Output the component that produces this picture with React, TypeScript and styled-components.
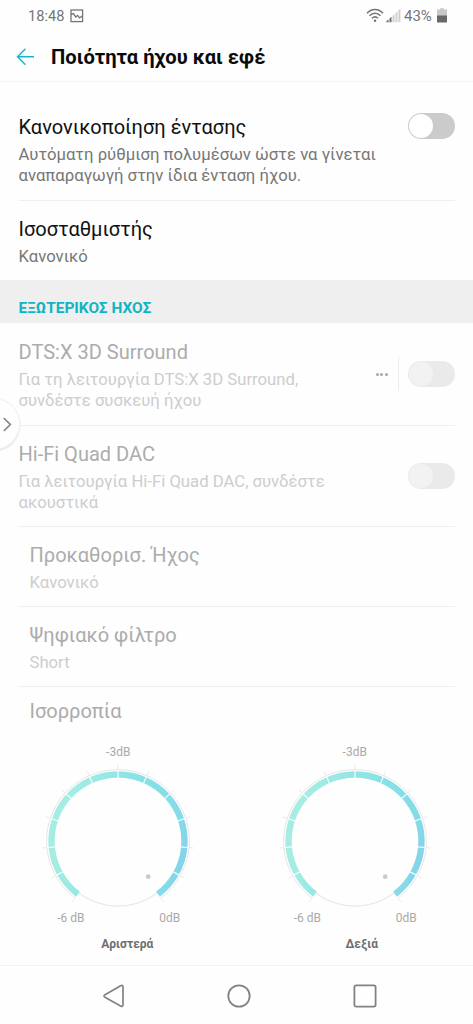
import React from 'react';
import styled, { createGlobalStyle } from 'styled-components';

const GlobalStyle = createGlobalStyle`
  * { box-sizing: border-box; }
  body { margin: 0; background: #fefefe; font-family: Roboto, "Noto Sans", sans-serif; }
`;

const Screen = styled.div`
  position: relative;
  width: 473px;
  height: 1024px;
  display: flex;
  flex-direction: column;
  background: #fefefe;
  overflow: hidden;
`;

const StatusBar = styled.div`
  flex: none;
  height: 31px;
  display: flex;
  align-items: center;
  padding: 0 26px 0 28px;
  color: #757575;
  font-size: 14.6px;
  line-height: 20px;
`;

const Clock = styled.span`
  width: 42px;
  white-space: nowrap;
`;

const StatusRight = styled.div`
  margin-left: auto;
  display: flex;
  align-items: center;
`;

const Percent = styled.span`
  width: 33px;
  font-size: 15px;
  white-space: nowrap;
`;

const AppBar = styled.header`
  flex: none;
  height: 51px;
  display: flex;
  align-items: center;
  padding: 1px 16px 0;
  border-bottom: 1px solid #f3f3f3;
`;

const Heading = styled.h1`
  margin: 1px 0 0 16px;
  font-size: 20.2px;
  line-height: 24px;
  font-weight: 700;
  color: #0a0a0a;
  white-space: nowrap;
`;

const Row = styled.section<{ $h: number; $top: number; $indent?: boolean; $last?: boolean }>`
  flex: none;
  height: ${(p) => p.$h}px;
  margin: 0 18.5px;
  padding: ${(p) => p.$top}px 0 0 ${(p) => (p.$indent ? 11 : 0)}px;
  border-bottom: 1px solid ${(p) => (p.$last ? 'transparent' : '#efefef')};
  display: flex;
  justify-content: space-between;
`;

const Title = styled.div<{ $off?: boolean }>`
  font-size: 20.05px;
  line-height: 24px;
  color: ${(p) => (p.$off ? '#acacac' : '#111')};
  white-space: nowrap;
`;

const Summary = styled.div<{ $off?: boolean }>`
  margin-top: 4.6px;
  font-size: 16.7px;
  line-height: 21.8px;
  color: ${(p) => (p.$off ? '#cdcdcd' : '#777')};
  white-space: nowrap;
`;

const Controls = styled.div<{ $top: number }>`
  display: flex;
  align-items: center;
  height: 34px;
  margin-top: ${(p) => p.$top}px;
`;

const Track = styled.div<{ $off?: boolean }>`
  width: 47px;
  height: 26px;
  padding: 1px;
  border-radius: 13px;
  background: ${(p) => (p.$off ? '#eaeaea' : '#cbcbcb')};
`;

const Knob = styled.div<{ $off?: boolean }>`
  width: 24px;
  height: 24px;
  border-radius: 50%;
  background: ${(p) => (p.$off ? '#f2f2f2' : '#fff')};
`;

const Dots = styled.div`
  display: flex;
  gap: 1.7px;
  margin-right: 9.5px;
  i { width: 3px; height: 3px; border-radius: 50%; background: #a8a8a8; }
`;

const Divider = styled.div`
  width: 1px;
  height: 34px;
  margin-right: 9px;
  background: #ececec;
`;

const SectionLabel = styled.h2`
  flex: none;
  height: 43px;
  margin: 0;
  padding: 18px 18.5px 0;
  background: #efefef;
  color: #11b4c2;
  font-size: 15.4px;
  line-height: 20px;
  font-weight: 700;
  white-space: nowrap;
`;

const Balance = styled.section`
  flex: none;
  height: 278px;
  padding-top: 12px;
`;

const BalanceTitle = styled(Title)`
  margin-left: 29.5px;
`;

const DialPair = styled.div`
  display: grid;
  grid-template-columns: 1fr 1fr;
`;

const DialBox = styled.div`
  display: flex;
  flex-direction: column;
  align-items: center;
  padding-top: 21px;
  font-size: 12px;
  line-height: 16px;
  color: #a9a9a9;
`;

const DialSvg = styled.svg`
  display: block;
  width: 160px;
  height: 146px;
  margin-top: 5px;
`;

const Range = styled.div`
  width: 124px;
  display: flex;
  justify-content: space-between;
  margin-top: -1px;
  padding-left: 1px;
`;

const Side = styled.div<{ $shift: number }>`
  margin: 10px 0 0 ${(p) => p.$shift}px;
  font-size: 12px;
  font-weight: 700;
  color: #6f6f6f;
`;

const NavBar = styled.nav`
  flex: none;
  height: 59px;
  margin-top: auto;
  border-top: 1px solid #f1f1f1;
  display: flex;
  align-items: center;
  justify-content: center;
  gap: 102px;
  padding: 2px 0 0 4px;
  svg { display: block; }
`;

const EdgeHandle = styled.div`
  position: absolute;
  left: -32px;
  top: 398px;
  width: 52px;
  height: 52px;
  border-radius: 50%;
  background: #fefefe;
  border: 1px solid #f3f3f3;
  box-shadow: 0 1px 2px rgba(0, 0, 0, 0.12);
  display: flex;
  align-items: center;
  justify-content: flex-end;
  padding-right: 6.6px;
`;

const Toggle = ({ off }: { off?: boolean }) => (
  <Track $off={off}>
    <Knob $off={off} />
  </Track>
);

const CX = 80;
const CY = 76;
const END = 143;
const STEP = END / 6;

const polar = (deg: number, r: number) => {
  const a = (deg * Math.PI) / 180;
  return [CX + r * Math.sin(a), CY - r * Math.cos(a)];
};

const arc = (r: number, from = -END, to = END) => {
  const [x1, y1] = polar(from, r);
  const [x2, y2] = polar(to, r);
  return `M${x1} ${y1}A${r} ${r} 0 ${to - from > 180 ? 1 : 0} 1 ${x2} ${y2}`;
};

const Dial = ({ side, id, shift }: { side: string; id: string; shift: number }) => {
  const marks = Array.from({ length: 13 }, (_, i) => (i - 6) * STEP);
  return (
    <DialBox>
      <div>-3dB</div>
      <DialSvg viewBox="0 0 160 146">
        <defs>
          <linearGradient id={id} x1="0" y1="0.75" x2="1" y2="0.95">
            <stop offset="0" stopColor="#a5ede3" />
            <stop offset="0.55" stopColor="#85e1e6" />
            <stop offset="0.85" stopColor="#85dbe8" />
            <stop offset="1" stopColor="#85d0e8" />
          </linearGradient>
        </defs>
        <path d={arc(71.4)} fill="none" stroke="#e6e6e6" strokeWidth="1" />
        <path d={arc(65.2, END, 360 - END)} fill="none" stroke="#e9e9e9" strokeWidth="1.2" />
        <path d={arc(66.5)} fill="none" stroke={`url(#${id})`} strokeWidth="6.4" />
        {marks.map((m, i) => {
          const [a, b] = polar(m, 72);
          const [c, d] = polar(m, 76);
          const [e, f] = polar(m, 63);
          const [g, h] = polar(m, 70);
          return (
            <g key={m}>
              <line x1={a} y1={b} x2={c} y2={d} stroke="#e6e6e6" strokeWidth="0.9" />
              {i > 0 && i < 12 && <line x1={e} y1={f} x2={g} y2={h} stroke="#f6fefe" strokeWidth="1.2" />}
            </g>
          );
        })}
        <circle cx="110.2" cy="111.7" r="2.4" fill="#cbcbcb" />
      </DialSvg>
      <Range>
        <span>-6 dB</span>
        <span>0dB</span>
      </Range>
      <Side $shift={shift}>{side}</Side>
    </DialBox>
  );
};

export default function App() {
  return (
    <>
      <GlobalStyle />
      <Screen>
        <StatusBar>
          <Clock>18:48</Clock>
          <svg width="14" height="14" viewBox="0 0 14 14" fill="none" stroke="#757575" strokeWidth="1.3">
            <rect x="1" y="1" width="11.6" height="11.6" />
            <path d="M1 5.4L3.3 4.6L5.8 8L7.6 6.4L9.6 8.8L12.6 6.8" />
          </svg>
          <StatusRight>
            <svg width="18" height="15" viewBox="0 0 18 15" fill="none" stroke="#757575" strokeWidth="1.5">
              <path d="M1 5.2C5.5 .2 12.5 .2 17 5.2M3.5 7.8C6.7 4.4 11.3 4.4 14.5 7.8M6 10.3C7.8 8.6 10.2 8.6 12 10.3" />
              <circle cx="9" cy="12.8" r="1.2" fill="#757575" stroke="none" />
            </svg>
            <svg width="20" height="15" viewBox="-2 0 20 15">
              <path d="M.5 14.2V13L2.6 11.5V14.2zM3.5 14.2V10.5L5.5 8.8V14.2z" fill="#6b6b6b" />
              <path d="M6.5 14.2V8L8.5 6.1V14.2zM9.5 14.2V5.2L11.4 3.4V14.2zM12.4 14.2V2.5L14.4 .6V14.2z" fill="#cfcfcf" />
            </svg>
            <Percent>43%</Percent>
            <svg width="10" height="15" viewBox="0 0 10 15">
              <path d="M0 1.5H3V.3H7V1.5H10V8H0z" fill="#c9c9c9" />
              <rect y="7.5" width="10" height="7" fill="#686868" />
            </svg>
          </StatusRight>
        </StatusBar>
        <AppBar>
          <svg width="19" height="18" viewBox="0 0 19 18" fill="none" stroke="#14b8c8" strokeWidth="1.4">
            <path d="M18 8.7H1.5M9.5 .7L1.5 8.7L9.5 16.7" />
          </svg>
          <Heading>Ποιότητα ήχου και εφέ</Heading>
        </AppBar>
        <Row $h={119} $top={33}>
          <div>
            <Title>Κανονικοποίηση έντασης</Title>
            <Summary>Αυτόματη ρύθμιση πολυμέσων ώστε να γίνεται<br />αναπαραγωγή στην ίδια ένταση ήχου.</Summary>
          </div>
          <Controls $top={-6}><Toggle /></Controls>
        </Row>
        <Row $h={79} $top={16} $last>
          <div>
            <Title>Ισοσταθμιστής</Title>
            <Summary>Κανονικό</Summary>
          </div>
        </Row>
        <SectionLabel>ΕΞΩΤΕΡΙΚΟΣ ΗΧΟΣ</SectionLabel>
        <Row $h={103} $top={17}>
          <div>
            <Title $off>DTS:X 3D Surround</Title>
            <Summary $off>Για τη λειτουργία DTS:X 3D Surround,<br />συνδέστε συσκευή ήχου</Summary>
          </div>
          <Controls $top={17}>
            <Dots><i /><i /><i /></Dots>
            <Divider />
            <Toggle off />
          </Controls>
        </Row>
        <Row $h={101} $top={16}>
          <div>
            <Title $off>Hi-Fi Quad DAC</Title>
            <Summary $off>Για λειτουργία Hi-Fi Quad DAC, συνδέστε<br />ακουστικά</Summary>
          </div>
          <Controls $top={17}><Toggle off /></Controls>
        </Row>
        <Row $h={80} $top={16} $indent>
          <div>
            <Title $off>Προκαθορισ. Ήχος</Title>
            <Summary $off>Κανονικό</Summary>
          </div>
        </Row>
        <Row $h={80} $top={16} $indent>
          <div>
            <Title $off>Ψηφιακό φίλτρο</Title>
            <Summary $off>Short</Summary>
          </div>
        </Row>
        <Balance>
          <BalanceTitle $off>Ισορροπία</BalanceTitle>
          <DialPair>
            <Dial side="Αριστερά" id="leftArc" shift={18} />
            <Dial side="Δεξιά" id="rightArc" shift={14} />
          </DialPair>
        </Balance>
        <NavBar>
          <svg width="24" height="26" viewBox="-1 0 24 26" fill="none" stroke="#828282" strokeWidth="1.7" strokeLinejoin="round">
            <path d="M3 11.7L18.6 2.8Q21 1.6 21 4V21.6Q21 24.2 18.6 22.9L3 14.3Q1 13 3 11.7Z" />
          </svg>
          <svg width="24" height="24" viewBox="0 0 24 24" fill="none" stroke="#828282" strokeWidth="1.8">
            <circle cx="12" cy="12" r="10.7" />
          </svg>
          <svg width="24" height="24" viewBox="0 0 24 24" fill="none" stroke="#828282" strokeWidth="1.8">
            <rect x="1.4" y="1.4" width="21.2" height="21.2" rx="1.8" />
          </svg>
        </NavBar>
        <EdgeHandle>
          <svg width="9" height="15" viewBox="0 0 9 15" fill="none" stroke="#858585" strokeWidth="1.7">
            <path d="M.8 1L7.3 7.5L.8 14" />
          </svg>
        </EdgeHandle>
      </Screen>
    </>
  );
}
